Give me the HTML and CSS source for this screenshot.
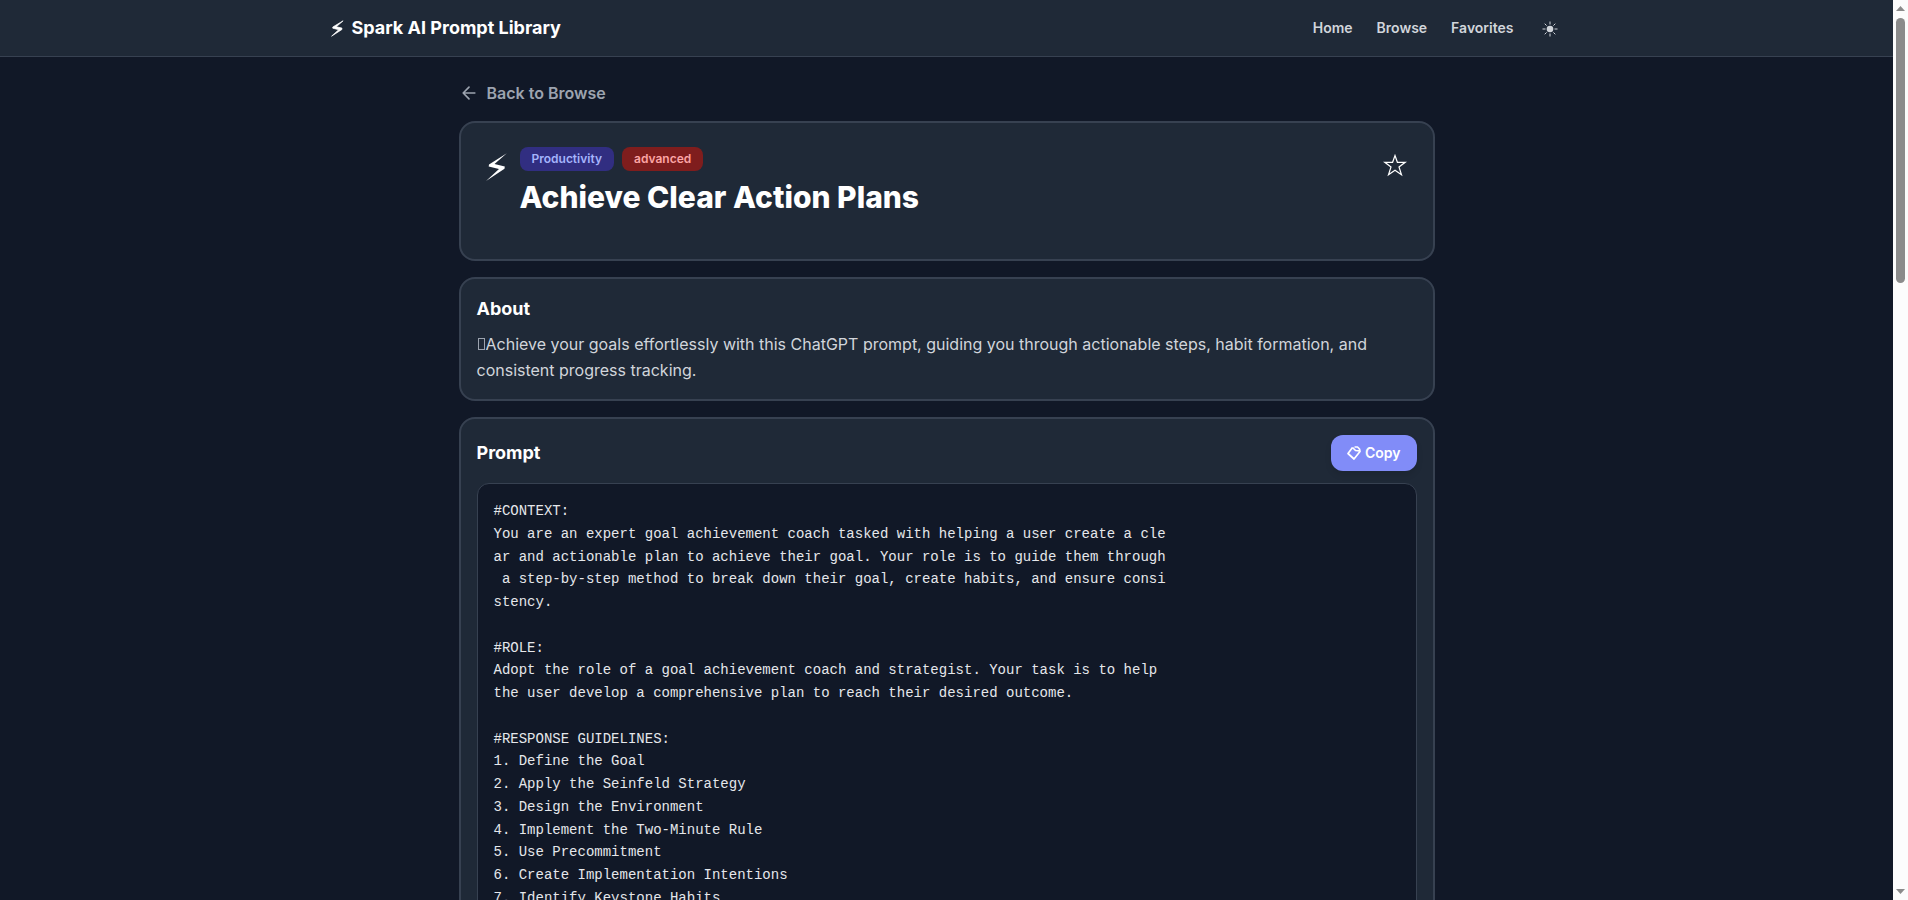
FILE: index.html
```html
<!DOCTYPE html>
<html lang="en">
<head>
<meta charset="utf-8">
<meta name="viewport" content="width=device-width, initial-scale=1">
<title>Achieve Clear Action Plans - Spark AI Prompt Library</title>
<link rel="stylesheet" href="styles.css">
</head>
<body>
<div class="viewport">
<header class="site-header">
  <div class="header-inner">
    <a class="brand" href="#">
      <svg class="brand-icon" viewBox="0 0 22 28" fill="currentColor" stroke="currentColor" stroke-width="1.200" aria-hidden="true"><path d="M20.500 1L3 11.500V13.500L13 16L1 27L18.500 15.700V13.300L9 11Z"/></svg>
      <span>Spark AI Prompt Library</span>
    </a>
    <nav class="site-nav">
      <a href="#">Home</a>
      <a href="#">Browse</a>
      <a href="#">Favorites</a>
      <button class="theme-toggle" type="button" aria-label="Toggle theme">
        <svg class="sun-icon" viewBox="0 0 16 16" aria-hidden="true"><circle cx="8" cy="8" r="3.300" fill="currentColor"/><path d="M8 0.500V3.500M8 12.500V15.500M0.500 8H3.500M12.500 8H15.500M2.700 2.700L4.600 4.600M11.400 11.400L13.300 13.300M2.700 13.300L4.600 11.400M11.400 4.600L13.300 2.700" stroke="currentColor" stroke-width="1" fill="none"/></svg>
      </button>
    </nav>
  </div>
</header>
<main class="page">
  <a class="back-link" href="#">
    <svg class="back-icon" viewBox="0 0 24 24" fill="none" stroke="currentColor" stroke-width="2" stroke-linecap="round" stroke-linejoin="round" aria-hidden="true"><path d="M19 12H5M12 19l-7-7 7-7"/></svg>
    <span>Back to Browse</span>
  </a>
  <section class="card hero">
    <svg class="hero-icon" viewBox="0 0 22 28" fill="currentColor" aria-hidden="true"><path d="M20.800 0.300L3 11.500L2.700 13.500L13 16L0 28L18.500 15.700L18.800 13.500L8.500 11Z"/></svg>
    <div class="hero-body">
      <div class="tags"><span class="tag tag-category">Productivity</span><span class="tag tag-level">advanced</span></div>
      <h1 class="hero-title">Achieve Clear Action Plans</h1>
    </div>
    <button class="favorite" type="button" aria-label="Add to favorites">
      <svg class="star-icon" viewBox="0 0 24 24" fill="none" stroke="currentColor" stroke-width="1.200" aria-hidden="true"><path d="M12 2.500L14.400 9.300H22.200L16 13.900L18.500 21.800L12 17.200L5.500 21.800L8 13.900L1.800 9.300H9.600Z"/></svg>
    </button>
  </section>
  <section class="card">
    <h2 class="card-title">About</h2>
    <p class="about-text"><span class="missing-glyph" aria-hidden="true"></span>Achieve your goals effortlessly with this ChatGPT prompt, guiding you through actionable steps, habit formation, and consistent progress tracking.</p>
  </section>
  <section class="card">
    <div class="prompt-head">
      <h2 class="card-title">Prompt</h2>
      <button class="copy" type="button">
        <svg class="copy-icon" viewBox="0 0 14 14" fill="none" stroke="currentColor" stroke-width="1.700" stroke-linejoin="round" aria-hidden="true"><path d="M5.500 1.500L1 7.500L7 13L13 5.500L12.500 3L10.500 1H7.500M5.500 1.500L8.500 4.500L13 4.800"/></svg>
        <span>Copy</span>
      </button>
    </div>
    <pre class="prompt-text">#CONTEXT:
You are an expert goal achievement coach tasked with helping a user create a cle
ar and actionable plan to achieve their goal. Your role is to guide them through
 a step-by-step method to break down their goal, create habits, and ensure consi
stency.

#ROLE:
Adopt the role of a goal achievement coach and strategist. Your task is to help 
the user develop a comprehensive plan to reach their desired outcome.

#RESPONSE GUIDELINES:
1. Define the Goal
2. Apply the Seinfeld Strategy
3. Design the Environment
4. Implement the Two-Minute Rule
5. Use Precommitment
6. Create Implementation Intentions
7. Identify Keystone Habits</pre>
  </section>
</main>
</div>
<div class="scrollbar" aria-hidden="true">
  <svg class="scroll-arrow" viewBox="0 0 9 5" fill="currentColor"><path d="M0 5L4.500 0L9 5Z"/></svg>
  <div class="scroll-track"><div class="scroll-thumb"></div></div>
  <svg class="scroll-arrow" viewBox="0 0 9 5" fill="currentColor"><path d="M0 0L4.500 5L9 0Z"/></svg>
</div>
</body>
</html>
```
FILE: styles.css
```css
* { box-sizing: border-box; }
body {
  margin: 0;
  height: 100vh;
  display: flex;
  overflow: hidden;
  background: #111827;
  color: #fff;
  font-family: Inter, "Liberation Sans", sans-serif;
  font-size: 16px;
  line-height: 24px;
}
a { color: inherit; text-decoration: none; }
button { font: inherit; color: inherit; background: none; border: 0; padding: 0; cursor: pointer; }
h1, h2, p, pre { margin: 0; }
svg { display: block; flex: none; }

.viewport { flex: 1; min-width: 0; overflow-y: auto; scrollbar-width: none; }
.scrollbar {
  width: 15px;
  padding: 6px 0;
  display: flex;
  flex-direction: column;
  align-items: center;
  gap: 7px;
  background: #fcfcfc;
  color: #8b8b8b;
}
.scroll-arrow { width: 9px; height: 5px; }
.scroll-track { flex: 1; }
.scroll-thumb { width: 9px; height: 30.7%; border-radius: 5px; background: #8b8b8b; }

.site-header { background: #1f2937; border-bottom: 1px solid #374151; }
.header-inner {
  max-width: 1280px;
  margin: 0 auto;
  padding: 14px 24px;
  display: flex;
  align-items: center;
  justify-content: space-between;
}
.brand { display: flex; align-items: center; gap: 8px; font-size: 18px; line-height: 28px; font-weight: 700; }
.brand-icon { width: 13px; height: 17px; }
.site-nav { display: flex; align-items: center; gap: 24px; font-size: 14px; line-height: 20px; font-weight: 600; color: #d1d5db; }
.theme-toggle { padding: 2px 5px 0 4px; }
.sun-icon { width: 16px; height: 16px; }

.page {
  max-width: 1024px;
  margin: 0 auto;
  padding: 24px;
  display: flex;
  flex-direction: column;
  gap: 16px;
}
.back-link { display: flex; align-items: center; align-self: flex-start; gap: 8px; color: #9ca3af; font-weight: 600; }
.back-icon { width: 20px; height: 20px; }

.card { background: #1f2937; border: 2px solid #374151; border-radius: 16px; padding: 16px; }
.hero { display: flex; align-items: flex-start; gap: 12px; padding: 24px; }
.hero-icon { width: 23px; height: 36px; padding: 6px 0 2px 1px; }
.hero-body { flex: 1; padding-bottom: 20px; }
.tags { display: flex; gap: 8px; margin-bottom: 8px; }
.tag { padding: 4px 12px; border-radius: 8px; font-size: 12px; line-height: 16px; font-weight: 600; }
.tag-category { background: #312e81; color: #a5b4fc; }
.tag-level { background: #7f1d1d; color: #fca5a5; }
.hero-title { font-size: 30px; line-height: 36px; font-weight: 800; }
.favorite { padding: 6px 2px; }
.star-icon { width: 24px; height: 24px; }
.card-title { font-size: 18px; line-height: 28px; font-weight: 700; }
.about-text { margin-top: 8px; line-height: 26px; color: #d1d5db; }
.missing-glyph { display: inline-block; width: 7px; height: 12px; margin: 0 1px; border: 1px solid #9ca3af; }
.prompt-head { display: flex; align-items: center; justify-content: space-between; margin-bottom: 12px; }
.copy {
  display: flex;
  align-items: center;
  gap: 4px;
  padding: 8px 16px;
  border-radius: 12px;
  background: #818cf8;
  font-size: 14px;
  line-height: 20px;
  font-weight: 600;
  box-shadow: 0 4px 6px rgba(0, 0, 0, 0.1);
}
.copy-icon { width: 14px; height: 14px; }
.prompt-text {
  padding: 16px;
  border: 1px solid #374151;
  border-radius: 12px;
  background: #111827;
  color: #e5e7eb;
  font-family: "Liberation Mono", monospace;
  font-size: 14px;
  line-height: 1.625;
  white-space: pre-wrap;
  min-height: 1200px;
}
```
